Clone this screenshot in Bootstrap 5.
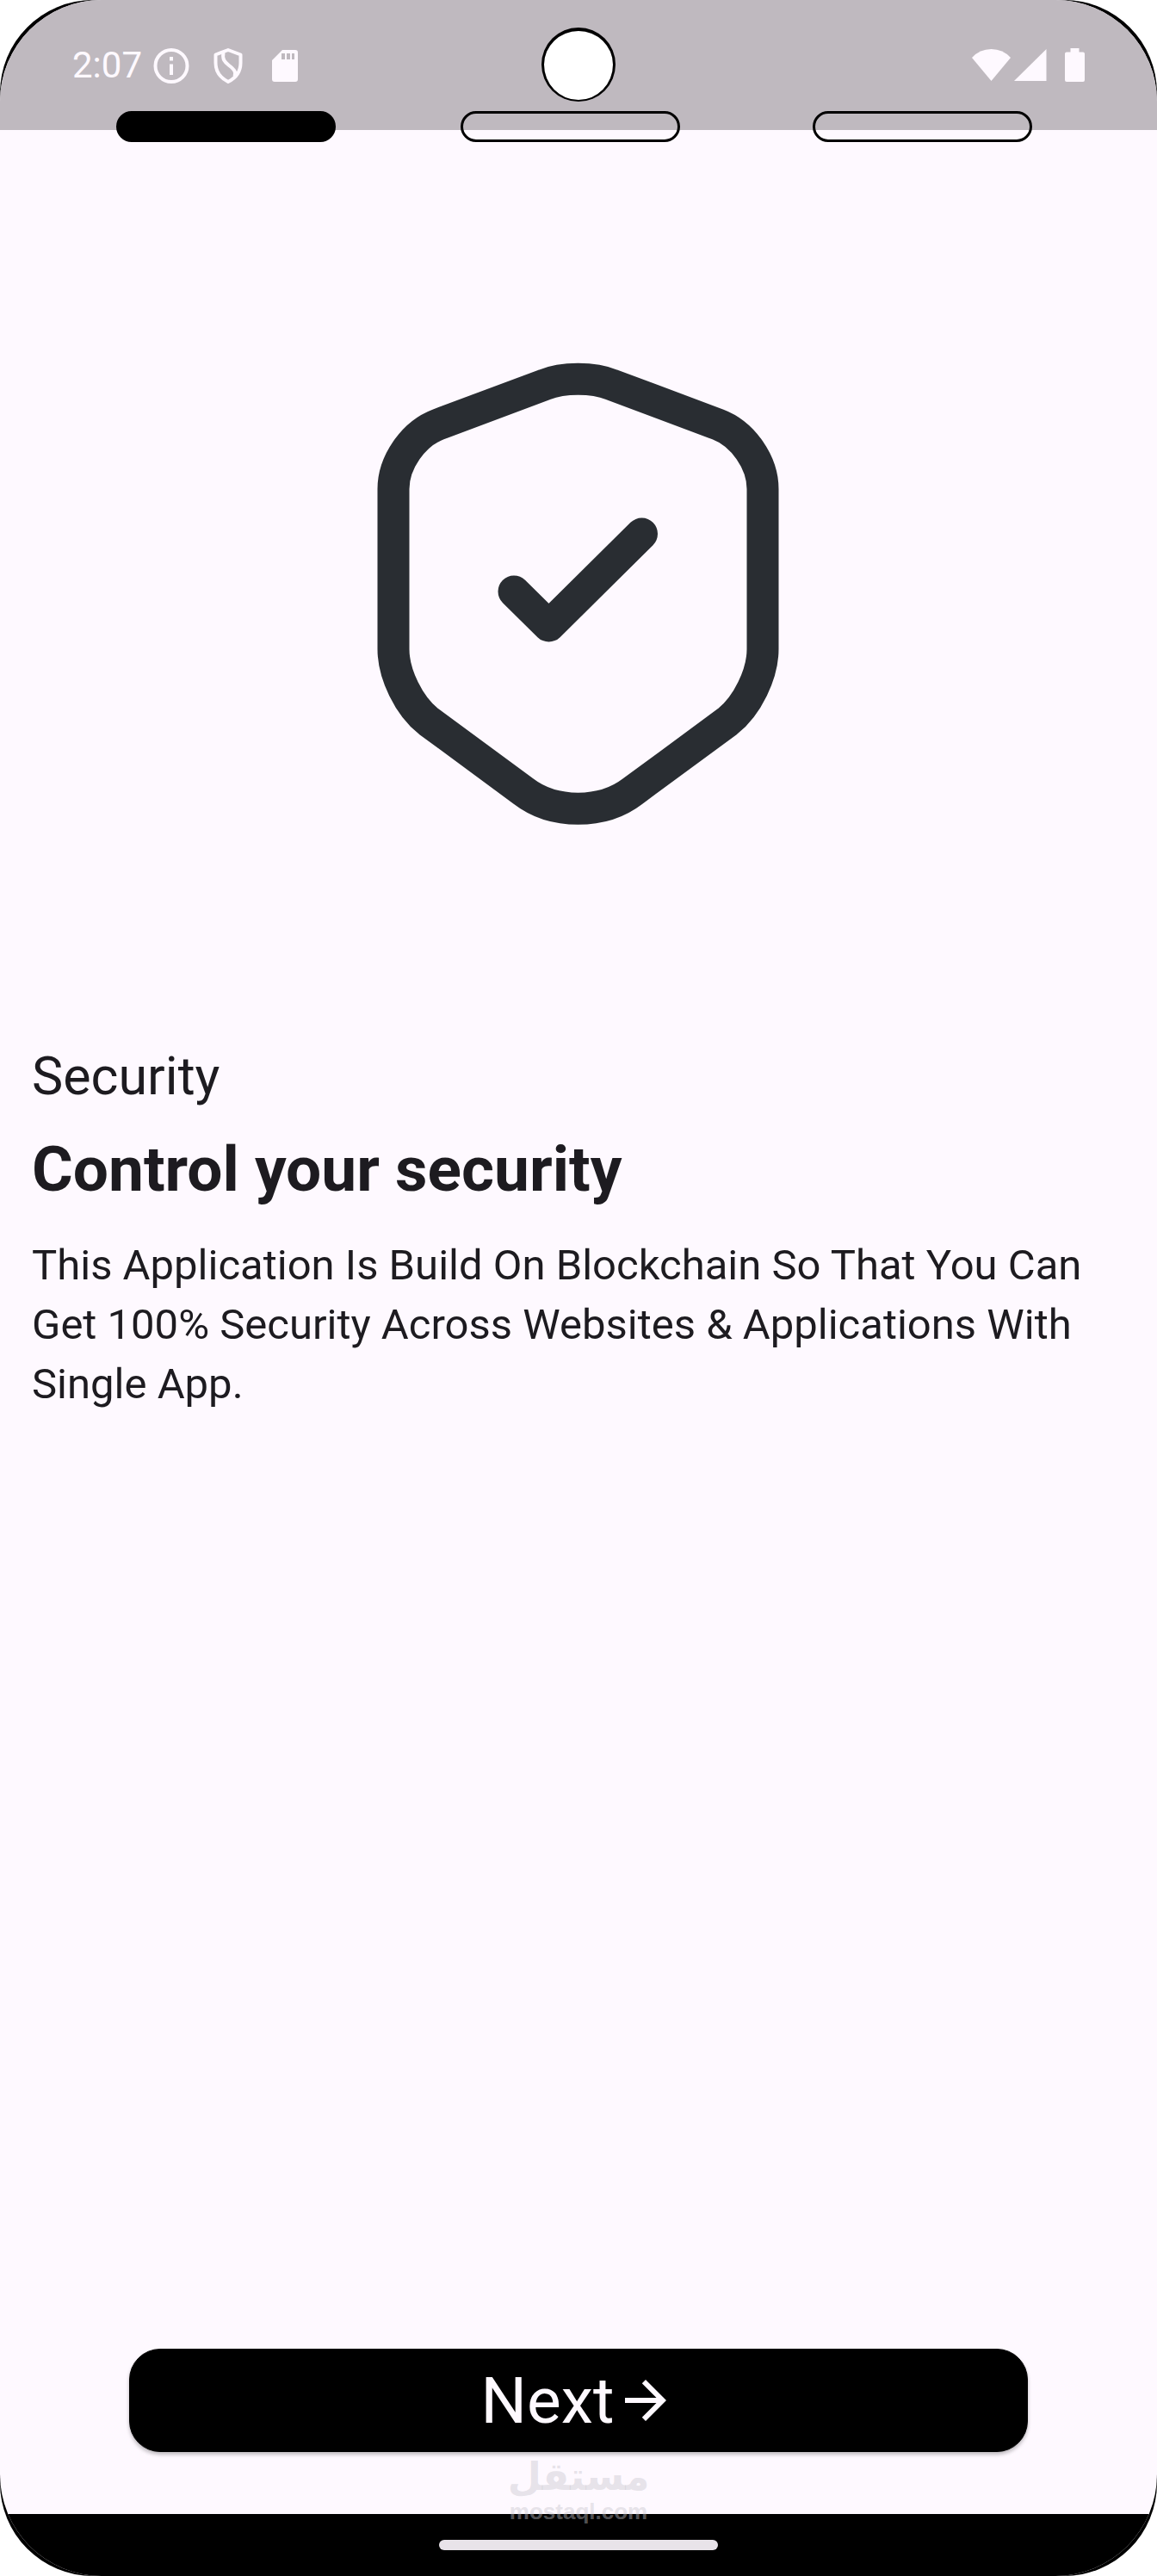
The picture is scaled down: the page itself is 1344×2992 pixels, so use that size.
<!DOCTYPE html>
<html lang="en">
<head>
<meta charset="utf-8">
<meta name="viewport" content="width=device-width, initial-scale=1">
<title>Security</title>
<link href="https://cdn.jsdelivr.net/npm/bootstrap@5.3.0/dist/css/bootstrap.min.css" rel="stylesheet">
<style>
  :root { --surface: #fef9ff; --ink: #1d1b20; }
  body { font-family: Roboto, "Liberation Sans", sans-serif; color: var(--ink); background: #fff; }
  .device { background: #000; border-radius: 108px; }
  .screen { background: var(--surface); border-radius: 118px; }
  .status-bar { height: 151px; background: #bfb9bf; padding: 0 84px; color: var(--surface); }
  .clock { font-size: 42px; line-height: 50px; }
  .lens { width: 86px; height: 86px; top: 32px; background: #fff; border: 3px solid #000; border-top-width: 4px; border-bottom-width: 2px; }
  .steps { display: grid; grid-template-columns: 400fr 409fr 255fr; padding: 0 145px 0 135px; margin-top: -22px; }
  .step { width: 255px; height: 36px; border: 3px solid #000; }
  .step.current { background: #000; }
  .hero { padding: 225px 0 217px; }
  .copy { padding: 0 37px; }
  .eyebrow { font-size: 61px; line-height: 86px; margin-bottom: 14px; }
  .headline { font-size: 73px; line-height: 103px; margin-bottom: 25px; }
  .blurb { font-size: 49px; line-height: 69px; margin: 0; }
  .next-wrap { padding: 0 150px; margin-bottom: 72px; }
  .btn-next { --bs-btn-color: var(--surface); --bs-btn-bg: #000; --bs-btn-border-color: #000;
    --bs-btn-hover-color: #fff; --bs-btn-hover-bg: #1d1b20; --bs-btn-padding-y: 0; --bs-btn-border-radius: 36px; --bs-btn-font-size: 75px;
    height: 120px; line-height: 88px; box-shadow: 0 3px 4px rgba(0,0,0,.25); }
  .brand { color: rgba(198,196,204,.43); bottom: 60px; }
  .brand-ar { font: 700 45px/50px "DejaVu Sans", sans-serif; }
  .brand-en { font: 700 26px/30px "Liberation Sans", sans-serif; }
  .nav-area { height: 72px; background: #000; }
  .handle { width: 324px; height: 12px; background: #e8e3e9; }
</style>
<script src="https://cdn.jsdelivr.net/npm/bootstrap@5.3.0/dist/js/bootstrap.bundle.min.js"></script>
</head>
<body>
<div class="device min-vh-100 d-flex flex-column overflow-hidden">
  <div class="screen flex-grow-1 d-flex flex-column overflow-hidden position-relative">
    <header class="status-bar d-flex align-items-center justify-content-between position-relative">
      <div class="d-flex align-items-center">
        <span class="clock">2:07</span>
        <svg width="190" height="48" viewBox="165 51 190 48" fill="none" aria-hidden="true">
          <circle cx="199" cy="75.500" r="18.500" stroke="currentColor" stroke-width="4"/>
          <path d="M197 65h4v4.500h-4zM197 73.500h4V86h-4z" fill="currentColor"/>
          <path d="M265 57L279.500 62.500V72C279.500 83 273 90 265 94C257 90 250.500 83 250.500 72V62.500Z" stroke="currentColor" stroke-width="4" stroke-linejoin="round"/>
          <path d="M259.500 60C258 68 261 71 266 75C271 79 275 82 272.500 88" stroke="currentColor" stroke-width="4"/>
          <path fill="currentColor" fill-rule="evenodd" d="M328 57H343Q346 57 346 60V91Q346 94 343 94H319Q316 94 316 91V69ZM327 61V68H331V61ZM333 61V68H337V61ZM339 61V68H342V61Z"/>
        </svg>
      </div>
      <svg width="132" height="48" viewBox="1128 51 132 48" fill="currentColor" aria-hidden="true">
        <path d="M1151.500 93L1129 66Q1138 56 1151.500 56T1174 66Z"/>
        <path d="M1178 93H1215.500V56Z"/>
        <path d="M1243.500 55H1253.500V59.500H1258Q1260 59.500 1260 61.500V92Q1260 94 1258 94H1239Q1237 94 1237 92V61.500Q1237 59.500 1239 59.500H1243.500Z"/>
      </svg>
      <span class="lens position-absolute start-50 translate-middle-x rounded-circle"></span>
    </header>
    <div class="steps position-relative" role="group" aria-label="Step 1 of 3">
      <span class="step current rounded-pill"></span>
      <span class="step rounded-pill"></span>
      <span class="step rounded-pill"></span>
    </div>
    <main class="flex-grow-1 d-flex flex-column">
      <div class="hero d-flex justify-content-center">
        <svg width="600" height="600" viewBox="372 390 600 600" fill="none" stroke="#292d32" stroke-width="37" stroke-linecap="round" stroke-linejoin="round" aria-hidden="true">
          <path d="M632 447C654 438 689 438 711 447L834 493C863 504 886 537 886 568V754C886 783 868 820 845 838L735 919C700 946 643 946 608 919L498 838C475 820 457 783 457 754V568C457 537 480 504 509 493Z"/>
          <path d="M597 687L637.500 727L745.500 620"/>
        </svg>
      </div>
      <section class="copy">
        <p class="eyebrow">Security</p>
        <h1 class="headline fw-bold">Control your security</h1>
        <p class="blurb">This Application Is Build On Blockchain So That You Can<br>Get 100% Security Across Websites &amp; Applications With<br>Single App.</p>
      </section>
      <div class="next-wrap mt-auto">
        <button type="button" class="btn btn-next w-100 d-flex align-items-center justify-content-center">
          <span>Next</span>
          <svg width="72" height="72" viewBox="0 0 24 24" fill="currentColor" aria-hidden="true"><path d="M12 4l-1.410 1.410L16.170 11H4v2h12.170l-5.580 5.590L12 20l8-8z"/></svg>
        </button>
      </div>
    </main>
    <footer class="nav-area d-flex align-items-center justify-content-center">
      <span class="handle rounded-pill"></span>
    </footer>
    <div class="brand position-absolute start-50 translate-middle-x d-flex flex-column align-items-center">
      <span class="brand-ar" lang="ar" dir="rtl">مستقل</span>
      <span class="brand-en">mostaql.com</span>
    </div>
  </div>
</div>
</body>
</html>
